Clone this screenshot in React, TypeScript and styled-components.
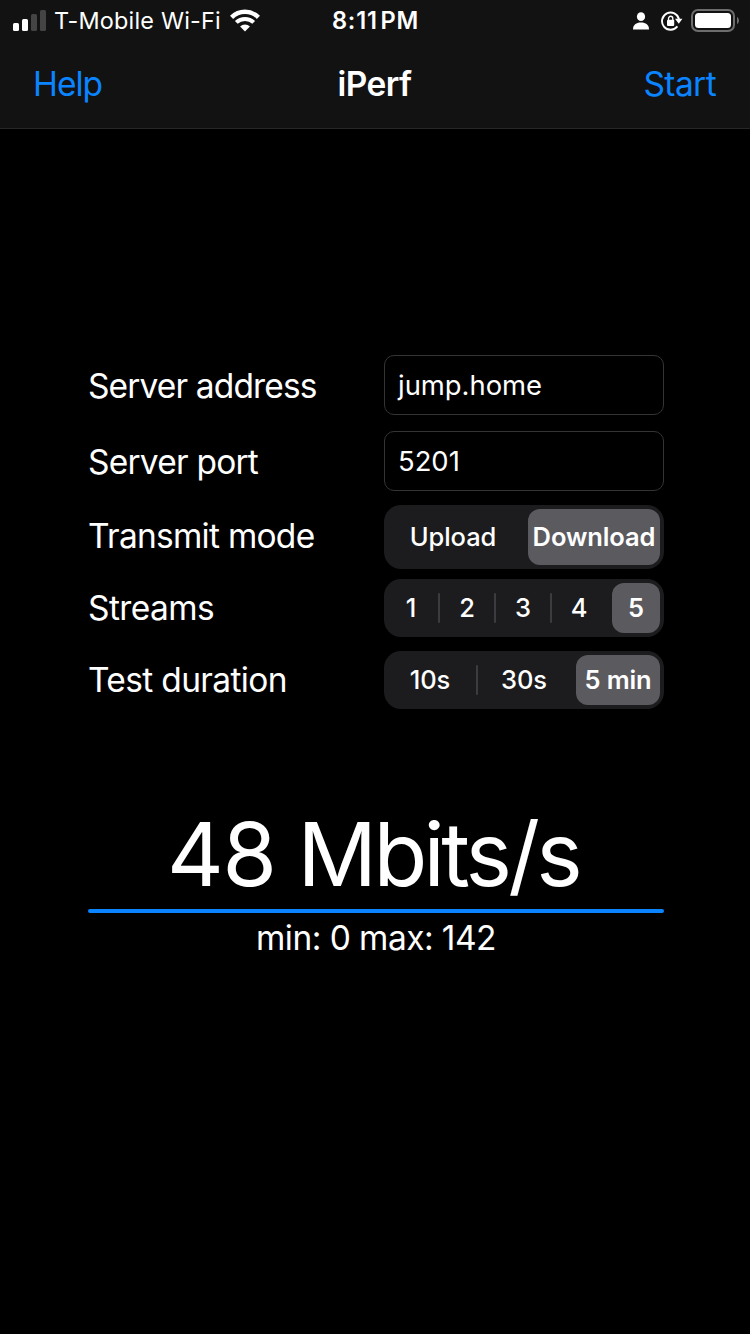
import React from "react";
import styled, { createGlobalStyle } from "styled-components";

const GlobalStyle = createGlobalStyle`
  * { box-sizing: border-box; }
  html, body { margin: 0; padding: 0; background: #000; }
`;

const Screen = styled.div`
  width: 750px;
  height: 1334px;
  overflow: hidden;
  display: flex;
  flex-direction: column;
  background: #000;
  color: #fff;
  font-family: Inter, "Liberation Sans", sans-serif;
  white-space: nowrap;
`;

const Header = styled.header`
  height: 129px;
  flex: none;
  background: #121212;
  border-bottom: 1px solid #272727;
`;

const StatusBar = styled.div`
  height: 41px;
  padding: 0 11px 0 13px;
  display: grid;
  grid-template-columns: 1fr auto 1fr;
  align-items: center;
  svg { display: block; }
`;

const StatusLeft = styled.div`
  display: flex;
  align-items: center;
`;

const StatusRight = styled.div`
  display: flex;
  align-items: center;
  justify-content: flex-end;
`;

const Carrier = styled.span`
  width: 176px;
  padding-left: 8px;
  font-size: 23.4px;
  line-height: 41px;
  letter-spacing: 0.2px;
`;

const Clock = styled.span`
  padding-right: 1px;
  font-size: 23.6px;
  line-height: 41px;
  font-weight: 600;
  letter-spacing: 0.8px;
  word-spacing: -4px;
`;

const NavBar = styled.nav`
  height: 86px;
  padding: 0 34px 0 33px;
  display: grid;
  grid-template-columns: 1fr auto 1fr;
  align-items: center;
`;

const NavButton = styled.button<{ $end?: boolean }>`
  justify-self: ${(p) => (p.$end ? "end" : "start")};
  border: 0;
  padding: 0;
  background: none;
  color: #0a84ff;
  font: 400 33.5px/40px Inter, sans-serif;
  letter-spacing: ${(p) => (p.$end ? "-0.6px" : "-1px")};
`;

const NavTitle = styled.h1`
  margin: 0;
  font-size: 33.5px;
  line-height: 40px;
  font-weight: 600;
  letter-spacing: -0.6px;
`;

const Content = styled.main`
  width: 576px;
  margin: 226px 0 0 88px;
  display: flex;
  flex-direction: column;
`;

const Row = styled.div<{ $gap: number }>`
  display: grid;
  grid-template-columns: 296px 280px;
  align-items: center;
  margin-bottom: ${(p) => p.$gap}px;
`;

const Label = styled.label<{ $track: number; $shift?: number }>`
  font-size: 33.5px;
  line-height: 40px;
  letter-spacing: ${(p) => p.$track}px;
  margin-top: ${(p) => p.$shift ?? 0}px;
`;

const Field = styled.input`
  width: 280px;
  height: 60px;
  border: 1px solid #343436;
  border-radius: 10px;
  padding: 0 8px;
  text-indent: 5px;
  background: #000;
  color: #fff;
  font: 400 27.4px/34px Inter, sans-serif;
  outline: none;
`;

const Segmented = styled.div<{ $columns: string; $height: number }>`
  display: grid;
  grid-template-columns: ${(p) => p.$columns};
  height: ${(p) => p.$height}px;
  border-radius: 17px;
  background: #1c1c1e;
`;

const Segment = styled.div`
  display: flex;
  align-items: center;
`;

const SegmentLabel = styled.span<{ $selected?: boolean }>`
  flex: 1;
  display: flex;
  align-items: center;
  justify-content: center;
  height: ${(p) => (p.$selected ? "calc(100% - 8px)" : "100%")};
  margin: ${(p) => (p.$selected ? "4px" : "0")};
  padding-bottom: 1px;
  border-radius: 12px;
  background: ${(p) => (p.$selected ? "#5b5a5f" : "transparent")};
  font-size: 25.5px;
  line-height: 31px;
  font-weight: ${(p) => (p.$selected ? 600 : 500)};
  letter-spacing: -0.1px;
`;

const Divider = styled.i<{ $visible: boolean }>`
  width: 2px;
  height: 30px;
  border-radius: 1px;
  background: ${(p) => (p.$visible ? "#3c3c40" : "transparent")};
`;

const Speed = styled.div`
  height: 108px;
  margin-top: 91px;
  padding-right: 6px;
  text-align: center;
  font-size: 88px;
  line-height: 108px;
  letter-spacing: -1.5px;
  word-spacing: -1px;
`;

const Unit = styled.span`
  letter-spacing: -3.7px;
`;

const Progress = styled.div`
  height: 4px;
  margin-top: 1px;
  border-radius: 2px;
  background: #0a84ff;
`;

const Range = styled.div`
  margin-top: 5px;
  text-align: center;
  font-size: 33.5px;
  line-height: 40px;
  letter-spacing: -0.55px;
`;

const SignalIcon = () => (
  <svg width="33" height="22" viewBox="0 0 33 22">
    <rect x="0" y="13" width="6" height="8" rx="1.5" fill="#fff" />
    <rect x="9" y="9" width="6" height="12" rx="1.5" fill="#fff" />
    <rect x="18" y="4" width="6" height="17" rx="1.5" fill="#444" />
    <rect x="27" y="0" width="6" height="21" rx="1.5" fill="#444" />
  </svg>
);

const WifiIcon = () => (
  <svg width="30" height="24" viewBox="0 0 30 24" fill="none">
    <path d="M1.6 8.4C9 .9 21 .9 28.4 8.4" stroke="#fff" strokeWidth="4.4" />
    <path d="M6.3 13.4C11.1 8.7 18.9 8.7 23.7 13.4" stroke="#fff" strokeWidth="4" />
    <path d="M10.1 17.5C12.8 14.7 17.2 14.7 19.9 17.5L15 22.5Z" fill="#fff" />
  </svg>
);

const PersonIcon = () => (
  <svg width="16" height="18" viewBox="0 0 16 18" fill="#fff">
    <ellipse cx="8" cy="4.7" rx="4.1" ry="4.4" />
    <path d="M0 17.4C0 12.8 3.2 10.6 8 10.6S16 12.8 16 17.4Z" />
  </svg>
);

const RotationLockIcon = () => (
  <svg width="22" height="20" viewBox="0 0 22 20" fill="none">
    <path d="M18 8.2A8.6 8.6 0 1 0 16.4 15.4" stroke="#fff" strokeWidth="1.9" />
    <path d="M14 7.7H21.4L17.8 12.7Z" fill="#fff" />
    <rect x="6" y="8.8" width="7.2" height="6.1" rx="1" fill="#fff" />
    <path d="M7.5 9V7.4a2.15 2.15 0 0 1 4.3 0V9" stroke="#fff" strokeWidth="1.3" />
  </svg>
);

const BatteryIcon = () => (
  <svg width="48" height="24" viewBox="0 0 48 24">
    <rect x="1" y="1" width="42" height="21" rx="6" fill="none" stroke="#6d6d6d" strokeWidth="2" />
    <rect x="4" y="4" width="36" height="15" rx="3.5" fill="#fff" />
    <path d="M46 8C48.6 9 48.6 14 46 15Z" fill="#6d6d6d" />
  </svg>
);

const Gap = styled.span<{ $w: number }>`
  width: ${(p) => p.$w}px;
`;

interface ControlProps {
  options: string[];
  selected: number;
  columns: string;
  height: number;
}

const SegmentedControl = ({ options, selected, columns, height }: ControlProps) => (
  <Segmented $columns={columns} $height={height}>
    {options.map((option, i) => (
      <Segment key={option}>
        <SegmentLabel $selected={i === selected}>{option}</SegmentLabel>
        {i !== selected && <Divider $visible={i + 1 !== selected} />}
      </Segment>
    ))}
  </Segmented>
);

export default function App() {
  return (
    <Screen>
      <GlobalStyle />
      <Header>
        <StatusBar>
          <StatusLeft>
            <SignalIcon />
            <Carrier>T-Mobile Wi-Fi</Carrier>
            <Gap $w={8} />
            <WifiIcon />
          </StatusLeft>
          <Clock>8:11 PM</Clock>
          <StatusRight>
            <PersonIcon />
            <Gap $w={12} />
            <RotationLockIcon />
            <Gap $w={8} />
            <BatteryIcon />
          </StatusRight>
        </StatusBar>
        <NavBar>
          <NavButton>Help</NavButton>
          <NavTitle>iPerf</NavTitle>
          <NavButton $end>Start</NavButton>
        </NavBar>
      </Header>
      <Content>
        <Row $gap={16}>
          <Label $track={-0.87} $shift={2}>Server address</Label>
          <Field defaultValue="jump.home" />
        </Row>
        <Row $gap={14}>
          <Label $track={-0.78} $shift={2}>Server port</Label>
          <Field defaultValue="5201" />
        </Row>
        <Row $gap={10}>
          <Label $track={-0.73} $shift={-2}>Transmit mode</Label>
          <SegmentedControl options={["Upload", "Download"]} selected={1} columns="140px 140px" height={64} />
        </Row>
        <Row $gap={14}>
          <Label $track={-0.6}>Streams</Label>
          <SegmentedControl options={["1", "2", "3", "4", "5"]} selected={4} columns="repeat(5, 56px)" height={58} />
        </Row>
        <Row $gap={0}>
          <Label $track={-0.65}>Test duration</Label>
          <SegmentedControl options={["10s", "30s", "5 min"]} selected={2} columns="94px 94px 92px" height={58} />
        </Row>
        <Speed>48 <Unit>Mbits/s</Unit></Speed>
        <Progress />
        <Range>min: 0 max: 142</Range>
      </Content>
    </Screen>
  );
}
